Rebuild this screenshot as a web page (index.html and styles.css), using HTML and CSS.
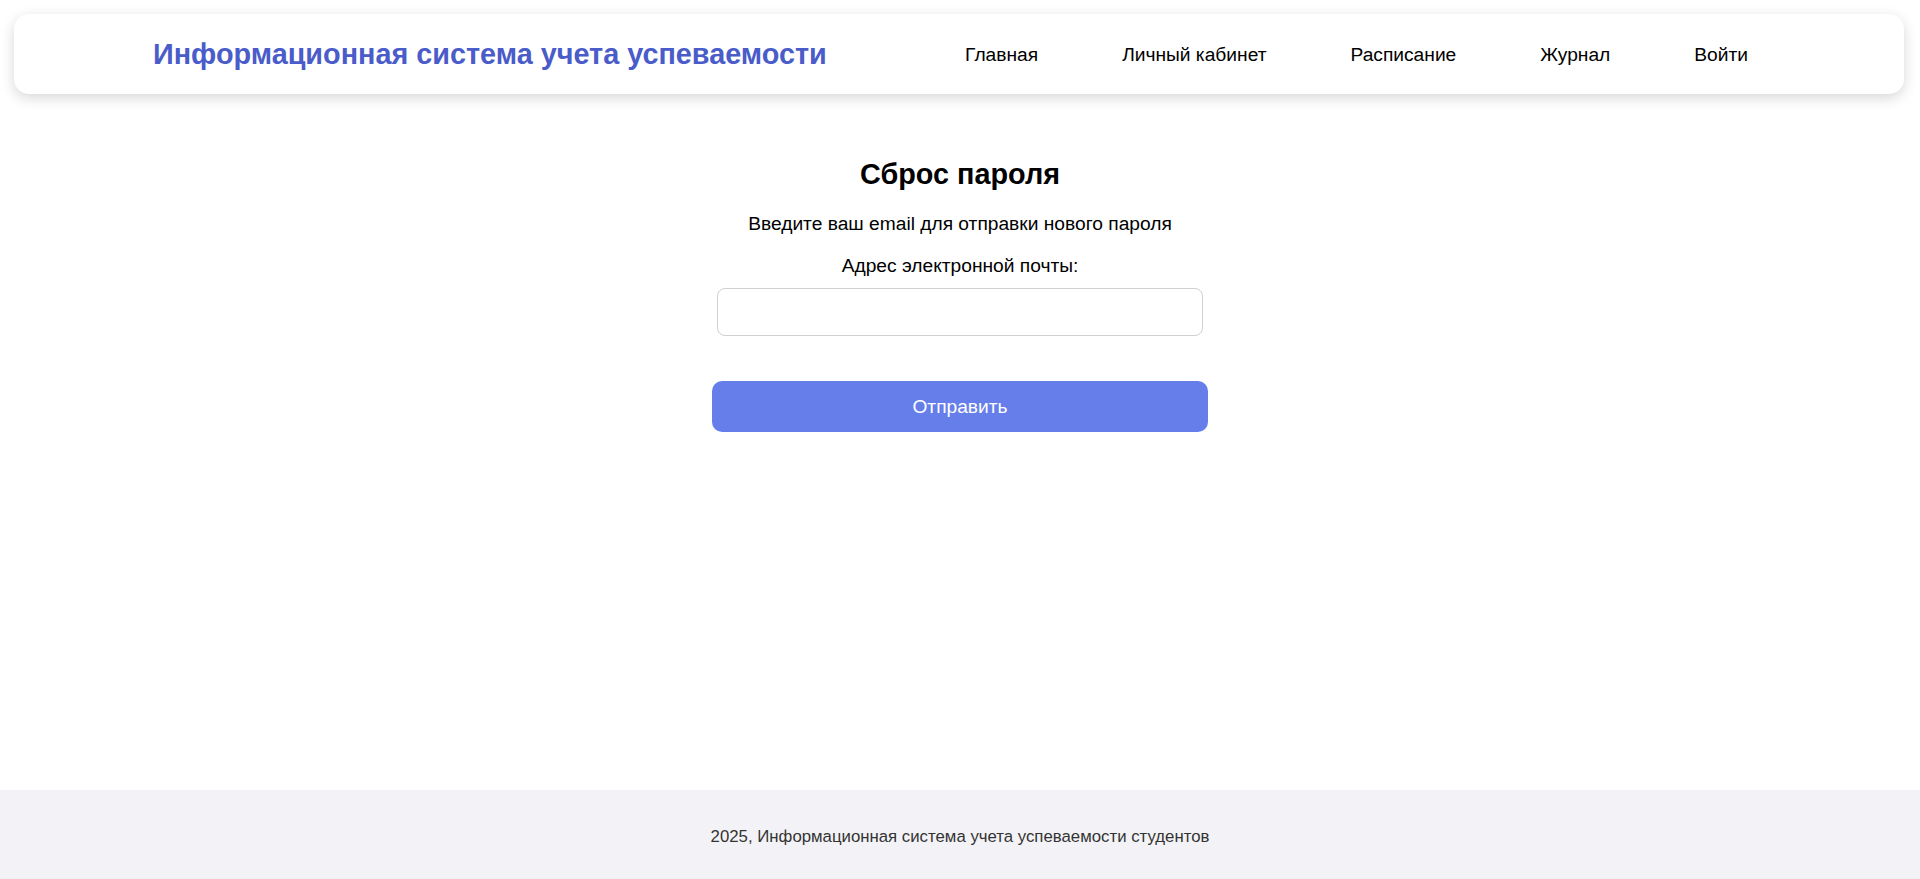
FILE: index.html
```html
<!DOCTYPE html>
<html lang="ru">
<head>
<meta charset="utf-8">
<title>Сброс пароля</title>
<link rel="stylesheet" href="styles.css">
</head>
<body>
<div class="page">
  <header class="header">
    <div class="brand">Информационная система учета успеваемости</div>
    <nav class="nav">
      <a class="nav-link" href="#">Главная</a>
      <a class="nav-link" href="#">Личный кабинет</a>
      <a class="nav-link" href="#">Расписание</a>
      <a class="nav-link" href="#">Журнал</a>
      <a class="nav-link" href="#">Войти</a>
    </nav>
  </header>
  <main class="main">
    <h2 class="title">Сброс пароля</h2>
    <p class="desc">Введите ваш email для отправки нового пароля</p>
    <form class="form">
      <label class="label" for="email">Адрес электронной почты:</label>
      <input class="input" id="email" type="email">
      <button class="btn" type="button">Отправить</button>
    </form>
  </main>
  <footer class="footer">2025, Информационная система учета успеваемости студентов</footer>
</div>
</body>
</html>
```
FILE: styles.css
```css
* { box-sizing: border-box; }
html, body { margin: 0; padding: 0; }
body {
  font-family: "Liberation Sans", Arial, sans-serif;
  color: #000;
  background: #fff;
}
.page {
  min-height: 100vh;
  display: flex;
  flex-direction: column;
}
.header {
  margin: 14px 16px 0 14px;
  height: 80px;
  padding: 0 136px 0 139px;
  display: flex;
  align-items: center;
  justify-content: space-between;
  background: #fff;
  border-radius: 15px;
  box-shadow: 0 4px 14px rgba(0, 0, 0, 0.16);
}
.brand {
  font-size: 28.8px;
  font-weight: bold;
  color: #4a5cc9;
}
.nav {
  display: flex;
  gap: 44px;
  padding-top: 2px;
}
.nav-link {
  font-size: 19.2px;
  color: #000;
  text-decoration: none;
  padding: 10px 20px;
}
.main {
  flex: 1;
  display: flex;
  flex-direction: column;
  align-items: center;
  padding-top: 64px;
}
.title {
  margin: 0;
  font-size: 28.8px;
  line-height: 32px;
  font-weight: bold;
}
.desc {
  margin: 23px 0 0;
  font-size: 19.2px;
  line-height: 22px;
}
.form {
  width: 496px;
  display: flex;
  flex-direction: column;
  align-items: center;
}
.label {
  margin-top: 20px;
  font-size: 19.2px;
  line-height: 22px;
}
.input {
  margin-top: 11px;
  width: 486px;
  height: 48px;
  border: 1.5px solid #d0d0d0;
  border-radius: 8px;
  font-size: 16px;
  padding: 0 12px;
  outline: none;
}
.btn {
  margin-top: 45px;
  width: 496px;
  height: 51px;
  border: none;
  border-radius: 10px;
  background: #667eea;
  color: #fff;
  font-family: "Liberation Sans", Arial, sans-serif;
  font-size: 19.2px;
  cursor: pointer;
}
.footer {
  height: 89px;
  padding-top: 4px;
  background: #f3f3f7;
  color: #333;
  font-size: 16.8px;
  display: flex;
  align-items: center;
  justify-content: center;
}
```
